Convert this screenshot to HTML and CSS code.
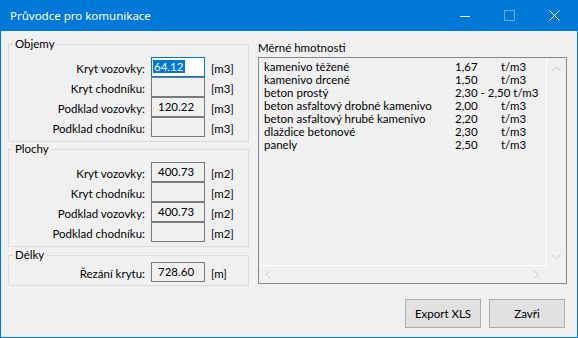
FILE: index.html
```html
<!DOCTYPE html>
<html lang="cs">
<head>
    <meta charset="UTF-8">
    <title>Průvodce pro komunikace</title>
    <link rel="stylesheet" href="styles.css">
</head>
<body>
    <div class="window">
        <div class="titlebar">
            <span class="title">Průvodce pro komunikace</span>
            <div class="caption">
                <span class="cap"><svg width="10" height="10" viewBox="0 0 10 10"><path d="M0 5.5h10" stroke="#fff" stroke-width="1"/></svg></span>
                <span class="cap disabled"><svg width="11" height="11" viewBox="0 0 11 11"><rect x="0.5" y="0.5" width="10" height="10" fill="none" stroke="#fff" stroke-width="1"/></svg></span>
                <span class="cap"><svg width="11" height="11" viewBox="0 0 11 11"><path d="M0.5 0.5l10 10M10.5 0.5l-10 10" stroke="#fff" stroke-width="1"/></svg></span>
            </div>
        </div>

        <div class="client">
            <!-- levý sloupec: skupiny s hodnotami -->
            <div class="left">
                <fieldset class="group">
                    <legend>Objemy</legend>
                    <div class="row"><span class="lbl">Kryt vozovky:</span><span class="field focused"><span class="sel">64.12</span></span><span class="unit">[m3]</span></div>
                    <div class="row"><span class="lbl">Kryt chodníku:</span><span class="field"></span><span class="unit">[m3]</span></div>
                    <div class="row"><span class="lbl">Podklad vozovky:</span><span class="field">120.22</span><span class="unit">[m3]</span></div>
                    <div class="row"><span class="lbl">Podklad chodníku:</span><span class="field"></span><span class="unit">[m3]</span></div>
                </fieldset>
                <fieldset class="group">
                    <legend>Plochy</legend>
                    <div class="row"><span class="lbl">Kryt vozovky:</span><span class="field">400.73</span><span class="unit">[m2]</span></div>
                    <div class="row"><span class="lbl">Kryt chodníku:</span><span class="field"></span><span class="unit">[m2]</span></div>
                    <div class="row"><span class="lbl">Podklad vozovky:</span><span class="field">400.73</span><span class="unit">[m2]</span></div>
                    <div class="row"><span class="lbl">Podklad chodníku:</span><span class="field"></span><span class="unit">[m2]</span></div>
                </fieldset>
                <fieldset class="group compact">
                    <legend>Délky</legend>
                    <div class="row"><span class="lbl">Řezání krytu:</span><span class="field">728.60</span><span class="unit">[m]</span></div>
                </fieldset>
            </div>

            <!-- pravý sloupec: seznam hmotností -->
            <div class="right">
                <div class="list-title">Měrné hmotnosti</div>
                <div class="listbox">
                    <div class="items">
                        <div class="item"><span class="name">kamenivo těžené</span><span class="val">1,67</span><span>t/m3</span></div>
                        <div class="item"><span class="name">kamenivo drcené</span><span class="val">1,50</span><span>t/m3</span></div>
                        <div class="item"><span class="name">beton prostý</span><span>2,30 - 2,50 t/m3</span></div>
                        <div class="item"><span class="name">beton asfaltový drobné kamenivo</span><span class="val">2,00</span><span>t/m3</span></div>
                        <div class="item"><span class="name">beton asfaltový hrubé kamenivo</span><span class="val">2,20</span><span>t/m3</span></div>
                        <div class="item"><span class="name">dlaždice betonové</span><span class="val">2,30</span><span>t/m3</span></div>
                        <div class="item"><span class="name">panely</span><span class="val">2,50</span><span>t/m3</span></div>
                    </div>
                    <div class="vscroll">
                        <svg width="9" height="6" viewBox="0 0 9 6"><path d="M0.5 5L4.5 1L8.5 5" fill="none" stroke="#c4c4c4"/></svg>
                        <svg width="9" height="6" viewBox="0 0 9 6"><path d="M0.5 1L4.5 5L8.5 1" fill="none" stroke="#c4c4c4"/></svg>
                    </div>
                    <div class="hscroll">
                        <svg width="6" height="9" viewBox="0 0 6 9"><path d="M5 0.5L1 4.5L5 8.5" fill="none" stroke="#c4c4c4"/></svg>
                        <svg width="6" height="9" viewBox="0 0 6 9"><path d="M1 0.5L5 4.5L1 8.5" fill="none" stroke="#c4c4c4"/></svg>
                    </div>
                    <div class="corner"></div>
                </div>
                <div class="buttons">
                    <button class="btn">Export XLS</button>
                    <button class="btn">Zavři</button>
                </div>
            </div>
        </div>
    </div>
</body>
</html>
```

FILE: styles.css
```css
body {
    margin: 0;
    font-family: Lato, "Noto Sans", sans-serif;
    font-size: 11.5px;
    color: #000;
}
.window {
    width: 578px;
    height: 338px;
    box-sizing: border-box;
    background: #f0f0f0;
    border: 1px solid #0078d7;
    border-top: none;
    display: flex;
    flex-direction: column;
}
.titlebar {
    height: 31px;
    margin: 0 -1px;
    background: #0078d7;
    color: #fff;
    display: flex;
    align-items: center;
    font-family: "Noto Sans", sans-serif;
    font-size: 11.5px;
}
.title {
    padding-left: 10px;
    flex: 1;
}
.caption {
    display: flex;
    height: 31px;
    padding-right: 1px;
}
.cap {
    width: 45px;
    display: flex;
    align-items: center;
    justify-content: center;
}
.cap.disabled svg {
    opacity: 0.4;
}

.client {
    flex: 1;
    display: flex;
    padding: 6px 10px 0 7px;
}
.left {
    width: 241px;
    display: flex;
    flex-direction: column;
}
.group {
    margin: 0;
    padding: 6px 0 4px 0;
    border: 1px solid #dcdcdc;
}
.group legend {
    margin-left: 4px;
    padding: 0 2px;
    line-height: 14px;
}
.group.compact {
    padding-top: 0;
    padding-bottom: 3px;
    margin-top: 1px;
}
.row {
    display: flex;
    height: 20px;
}
.lbl {
    width: 136px;
    text-align: right;
    line-height: 20px;
    padding-top: 2px;
}
.unit {
    line-height: 20px;
    padding-top: 2px;
    margin-left: 6px;
}
.field {
    width: 54px;
    height: 20px;
    margin-left: 6px;
    box-sizing: border-box;
    border: 1px solid #7a7a7a;
    background: #f0f0f0;
    padding: 1px 0 0 6px;
    line-height: 16px;
}
.field.focused {
    border-color: #0078d7;
    background: #fff;
    padding-left: 1px;
}
.sel {
    background: #0078d7;
    color: #fff;
    padding: 0 2px 0 1px;
}

.right {
    flex: 1;
    margin-left: 9px;
    display: flex;
    flex-direction: column;
}
.list-title {
    margin-top: 4px;
    line-height: 14px;
    margin-bottom: 2px;
}
.listbox {
    height: 227px;
    box-sizing: border-box;
    border: 1px solid #828790;
    display: grid;
    grid-template-columns: 1fr 19px;
    grid-template-rows: 1fr 17px;
}
.items {
    padding: 2px 0 0 5px;
    border-right: 1px solid #fff;
    border-bottom: 1px solid #fff;
}
.item {
    display: flex;
    line-height: 13px;
    white-space: nowrap;
}
.item .name {
    width: 191px;
}
.item .val {
    width: 46px;
}
.vscroll {
    display: flex;
    flex-direction: column;
    justify-content: space-between;
    align-items: center;
    padding: 8px 0 6px;
}
.hscroll {
    display: flex;
    justify-content: space-between;
    align-items: center;
    padding: 0 8px 0 6px;
}
.buttons {
    display: flex;
    justify-content: flex-end;
    gap: 8px;
    margin-top: 15px;
    padding-right: 2px;
}
.btn {
    width: 76px;
    height: 29px;
    font-family: inherit;
    font-size: inherit;
    background: #e1e1e1;
    border: 1px solid #adadad;
    padding: 0;
    color: #000;
}
```
